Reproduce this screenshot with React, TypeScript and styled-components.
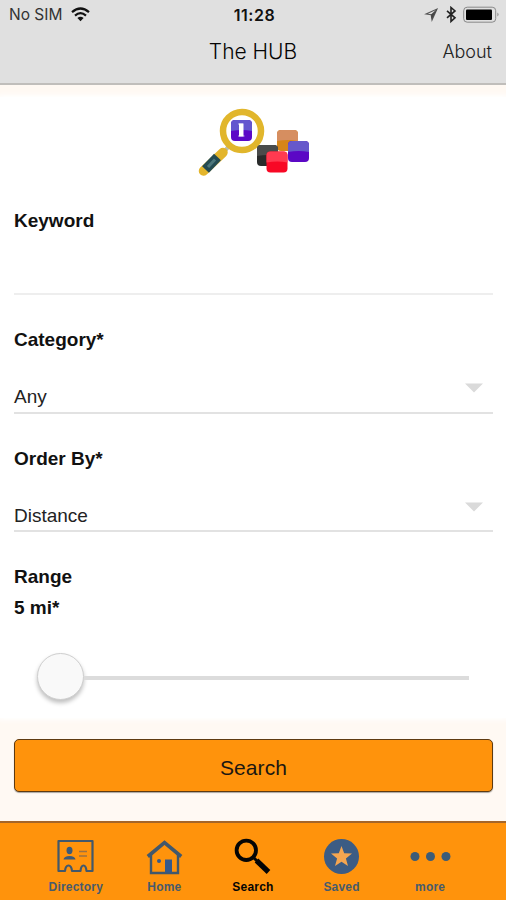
import React from "react";
import styled, { createGlobalStyle, css } from "styled-components";

const GlobalStyle = createGlobalStyle`
  * { box-sizing: border-box; }
  html, body { margin: 0; padding: 0; }
  body { font-family: "Liberation Sans", Arial, sans-serif; color: #111; background: #fffaf4; }
`;

const Screen = styled.div`
  display: flex;
  flex-direction: column;
  width: 506px;
  height: 900px;
  overflow: hidden;
  background: #fff9f3;
`;

const Header = styled.header`
  flex: none;
  height: 85px;
  background: #e0e0e0;
  border-bottom: 2px solid #c0bebb;
`;

const StatusBar = styled.div`
  display: grid;
  grid-template-columns: 1fr auto 1fr;
  align-items: center;
  height: 29px;
  padding: 0 6px 0 9px;
  font-family: Inter, sans-serif;
  font-size: 15.5px;
  line-height: 28px;
`;

const Carrier = styled.div`
  display: flex;
  align-items: center;
  gap: 9px;
  color: #333;
`;

const Clock = styled.div`
  font-size: 16px;
  font-weight: 600;
  letter-spacing: 0.5px;
`;

const StatusIcons = styled.div`
  display: flex;
  align-items: center;
  justify-content: flex-end;
`;

const TitleBar = styled.div`
  display: grid;
  grid-template-columns: 1fr auto 1fr;
  height: 46px;
  padding: 0 14px;
  font-family: Inter, sans-serif;
  line-height: 46px;
`;

const Title = styled.h1`
  grid-column: 2;
  margin: 0;
  font-size: 21px;
  font-weight: 300;
  color: #050505;
`;

const HeaderLink = styled.span`
  justify-self: end;
  font-size: 18px;
  font-weight: 300;
  color: #222;
`;

const Form = styled.main`
  flex: none;
  height: 621px;
  margin-top: 12px;
  padding: 0 13px 0 14px;
  background: #fff;
  box-shadow: 0 0 5px 2px #fff;
`;

const Logo = styled.div`
  display: flex;
  justify-content: center;
  height: 110px;
  padding-top: 10px;
`;

const Field = styled.section<{ $tall?: boolean }>`
  height: ${(p) => (p.$tall ? 119 : 118.5)}px;
`;

const Label = styled.div`
  height: 31px;
  font-size: 19px;
  font-weight: 700;
  line-height: 28px;
`;

const Control = styled.div<{ $faint?: boolean }>`
  display: flex;
  justify-content: space-between;
  height: ${(p) => (p.$faint ? 57 : 56.5)}px;
  padding: 26px 10px 0 0;
  border-bottom: 2px solid ${(p) => (p.$faint ? "#eeeeee" : "#e2e2e2")};
  font-size: 19px;
  line-height: 28px;
  color: #222;
`;

const Caret = styled.svg`
  display: block;
  flex: none;
`;

const Slider = styled.div`
  display: flex;
  align-items: center;
  height: 48px;
  margin: 27px 24px 0 22.5px;
`;

const Knob = styled.div`
  flex: none;
  width: 47px;
  height: 47px;
  border: 1.5px solid #cfcfcf;
  border-radius: 50%;
  background: #f9f9f9;
  box-shadow: 0 3px 4px rgba(0, 0, 0, 0.25);
`;

const Track = styled.div`
  flex: 1;
  height: 4px;
  margin-top: 3px;
  background: #dcdcdc;
`;

const Actions = styled.div`
  flex: 1;
  padding: 21px 13px 0 14px;
`;

const SearchButton = styled.button`
  display: block;
  width: 100%;
  height: 53px;
  padding: 4px 0 0;
  border: 1.5px solid #5e3a10;
  border-radius: 5px;
  background: #ff930c;
  box-shadow: 0 1px 1px #a8a5a0;
  font-family: "Liberation Sans", Arial, sans-serif;
  font-size: 21px;
  letter-spacing: 0.1px;
  color: #1b1712;
`;

const TabBar = styled.nav`
  display: flex;
  flex: none;
  height: 79px;
  padding: 0 31.5px;
  border-top: 2px solid #a4662a;
  background: #ff930c;
`;

const Tab = styled.div<{ $active?: boolean }>`
  display: flex;
  flex: 1;
  flex-direction: column;
  align-items: center;
  padding-top: 13px;
  font-size: 12px;
  font-weight: 700;
  line-height: 14px;
  letter-spacing: 0.2px;
  color: #475b6c;
  ${(p) =>
    p.$active &&
    css`
      color: #050505;
    `}
`;

const TabIcon = styled.svg`
  display: block;
  flex: none;
  margin-bottom: 3px;
`;

const Wifi = () => (
  <svg width="19" height="15" viewBox="0 0 19 15" fill="none" stroke="#111" strokeWidth="2.2">
    <path d="M1 5.2Q9.5-2.2 18 5.2M4 8.6Q9.5 3.8 15 8.6" />
    <path d="M6.4 11.1Q9.5 8.2 12.6 11.1L9.5 14.2Z" fill="#111" stroke="none" />
  </svg>
);

const SystemIcons = () => (
  <svg width="76" height="18" viewBox="424 5.5 76 18">
    <path d="m426 13.5 11-5-5 11-.8-5.2Z" fill="none" stroke="#555" strokeWidth="1.1" />
    <path d="m431 14 6-5.5-5 10.5Z" fill="#444" />
    <path d="m447 10.3 8 7-4 3.6V7l4 3.4-8 7" fill="none" stroke="#222" strokeWidth="1.6" />
    <rect x="463.7" y="6.7" width="32" height="15" rx="3.5" fill="none" stroke="#888" strokeWidth="1" />
    <rect x="466" y="9" width="26" height="10.6" rx="1" fill="#000" />
    <path d="M497.5 12v4q2-2 0-4" fill="#777" />
  </svg>
);

interface BlockProps {
  x: number;
  y: number;
  base: string;
  shine: string;
}

const Block = ({ x, y, base, shine }: BlockProps) => (
  <g transform={`translate(${x} ${y})`}>
    <rect width="21" height="21" rx="4" fill={base} />
    <path d="M0 11V4q0-4 4-4h13q4 0 4 4v7q-10-2-21 0" fill={shine} />
  </g>
);

const HubLogo = () => (
  <svg width="112" height="70" viewBox="198 107 112 70">
    <path d="m229 146-5 6" stroke="#bdbdab" strokeWidth="4" />
    <path d="m203.500 171 19.500-18.500" stroke="#e3b52c" strokeWidth="9.500" strokeLinecap="round" />
    <path d="m205.500 169.500 12-12.500" stroke="#244b52" strokeWidth="9.500" />
    <path d="m208 167 7-7.500" stroke="#4d777b" strokeWidth="3" />
    <circle cx="242" cy="131" r="19" fill="#fff" stroke="#e1b62c" strokeWidth="6.500" />
    <Block x={231} y={120} base="#5b08c7" shine="#6356cf" />
    <path d="M239 123.500h4.500v13h-4.500Z" fill="#fff" />
    <path d="M238 124h5M238 136h6.500" stroke="#fff" strokeOpacity="0.600" />
    <Block x={277} y={130} base="#d68518" shine="#d68e60" />
    <Block x={257} y={145} base="#292b2b" shine="#494b4b" />
    <Block x={288} y={141} base="#5b08c5" shine="#6658cb" />
    <Block x={266.5} y={151.5} base="#f80825" shine="#ff3a50" />
  </svg>
);

const Select = ({ label, value }: { label: string; value: string }) => (
  <Field>
    <Label>{label}</Label>
    <Control>
      <span>{value}</span>
      <Caret width="18" height="10" viewBox="0 0 18 10">
        <path d="M0 .5h18L9 9.5Z" fill="#dadada" />
      </Caret>
    </Control>
  </Field>
);

const tabs = [
  {
    name: "Directory",
    icon: (
      <g fill="none" stroke="#42586c" strokeWidth="2.2">
        <path d="M3.500 5h34v30h-6q-.5-5.500-3-5.500t-3 5.500h-8.500q-.5-5.500-3.500-5.500t-3.500 5.500H3.500Z" strokeLinejoin="round" />
        <ellipse cx="14.5" cy="14.5" rx="3" ry="3.7" fill="#3c5a78" stroke="none" />
        <path d="M8.500 23.500q.5-3.500 6-3.500t6 3.500Z" fill="#3c5a78" stroke="none" />
        <path d="M24 15.500h8M24 20h8" stroke="#9b7143" strokeWidth="1.6" />
      </g>
    ),
  },
  {
    name: "Home",
    icon: (
      <g fill="none" stroke="#42586c" strokeWidth="2.4">
        <path d="M7 19v18h27V19" />
        <path d="M3.8 20.500 20.500 6.500l16.700 14" strokeWidth="3.6" />
        <rect x="21" y="23.500" width="7" height="13" fill="#35598b" stroke="none" />
        <circle cx="15" cy="25" r="2" fill="#35598b" stroke="none" />
      </g>
    ),
  },
  {
    name: "Search",
    icon: (
      <g fill="none" stroke="#050505">
        <circle cx="14.300" cy="14.300" r="9.700" strokeWidth="3.8" />
        <path d="m21 21 4 4" strokeWidth="3" />
        <path d="m24.500 24.500 12 11.500" strokeWidth="5.2" />
      </g>
    ),
  },
  {
    name: "Saved",
    icon: (
      <>
        <circle cx="20.5" cy="20.5" r="17.5" fill="#3c5c84" />
        <path d="m20.500 10 2.700 7.300 7.800.3-6.100 4.900 2.100 7.600-6.500-4.400-6.500 4.400 2.100-7.600-6.100-4.900 7.800-.3Z" fill="#f6a650" />
      </>
    ),
  },
  {
    name: "more",
    icon: (
      <g fill="#3c5c78">
        <circle cx="5" cy="20.5" r="4.5" />
        <circle cx="20.5" cy="20.5" r="4.5" />
        <circle cx="36" cy="20.5" r="4.5" />
      </g>
    ),
  },
];

export default function App() {
  return (
    <Screen>
      <GlobalStyle />
      <Header>
        <StatusBar>
          <Carrier>
            No SIM <Wifi />
          </Carrier>
          <Clock>11:28</Clock>
          <StatusIcons>
            <SystemIcons />
          </StatusIcons>
        </StatusBar>
        <TitleBar>
          <Title>The HUB</Title>
          <HeaderLink>About</HeaderLink>
        </TitleBar>
      </Header>
      <Form>
        <Logo>
          <HubLogo />
        </Logo>
        <Field $tall>
          <Label>Keyword</Label>
          <Control $faint />
        </Field>
        <Select label="Category*" value="Any" />
        <Select label="Order By*" value="Distance" />
        <Label>Range</Label>
        <Label>5 mi*</Label>
        <Slider>
          <Knob />
          <Track />
        </Slider>
      </Form>
      <Actions>
        <SearchButton>Search</SearchButton>
      </Actions>
      <TabBar>
        {tabs.map((tab) => (
          <Tab key={tab.name} $active={tab.name === "Search"}>
            <TabIcon width="41" height="41" viewBox="0 0 41 41">
              {tab.icon}
            </TabIcon>
            {tab.name}
          </Tab>
        ))}
      </TabBar>
    </Screen>
  );
}
